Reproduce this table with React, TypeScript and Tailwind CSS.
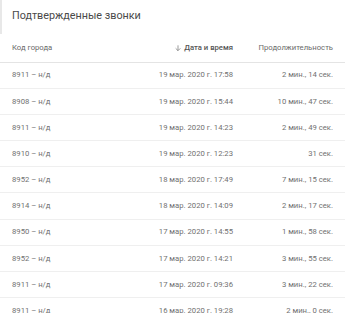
import React from "react";

const rows = [
  ["8911 – н/д", "19 мар. 2020 г. 17:58", "2 мин., 14 сек."],
  ["8908 – н/д", "19 мар. 2020 г. 15:44", "10 мин., 47 сек."],
  ["8911 – н/д", "19 мар. 2020 г. 14:23", "2 мин., 49 сек."],
  ["8910 – н/д", "19 мар. 2020 г. 12:23", "31 сек."],
  ["8952 – н/д", "18 мар. 2020 г. 17:49", "7 мин., 15 сек."],
  ["8914 – н/д", "18 мар. 2020 г. 14:09", "2 мин., 17 сек."],
  ["8950 – н/д", "17 мар. 2020 г. 14:55", "1 мин., 58 сек."],
  ["8952 – н/д", "17 мар. 2020 г. 14:21", "3 мин., 55 сек."],
  ["8911 – н/д", "17 мар. 2020 г. 09:36", "3 мин., 22 сек."],
  ["8911 – н/д", "16 мар. 2020 г. 19:28", "2 мин., 0 сек."],
];

export default function App() {
  return (
    <div
      className="relative w-[345px] h-[313px] overflow-hidden bg-white"
      style={{ fontFamily: "Roboto, 'Noto Sans', sans-serif" }}
    >
      <div className="absolute left-0 top-0 w-[2px] h-[34px] bg-[#e8e8e8]" />
      <div className="pl-3 pt-[9px] h-[35px] text-[10.8px] text-[#4a4a4a] leading-[14px]">
        Подтвержденные звонки
      </div>
      <div className="grid grid-cols-[1fr_auto_100px] items-center pl-3 pr-3 h-[27.5px] border-b border-[#e4e4e4] text-[7.7px] text-[#6a6a6a]">
        <div>Код города</div>
        <div className="flex items-center gap-[2px] font-medium text-[#555]">
          <svg width="8" height="8" viewBox="0 0 24 24" fill="none" stroke="#777" strokeWidth="2.2">
            <path d="M12 4v16M5 13l7 7 7-7" />
          </svg>
          Дата и время
        </div>
        <div className="text-right">Продолжительность</div>
      </div>
      {rows.map((r, i) => (
        <div
          key={i}
          className="grid grid-cols-[1fr_auto_100px] items-center pl-3 pr-3 h-[26.2px] border-b border-[#efefef] text-[7.7px] text-[#707070]"
        >
          <div>{r[0]}</div>
          <div className="text-right">{r[1]}</div>
          <div className="text-right">{r[2]}</div>
        </div>
      ))}
    </div>
  );
}
